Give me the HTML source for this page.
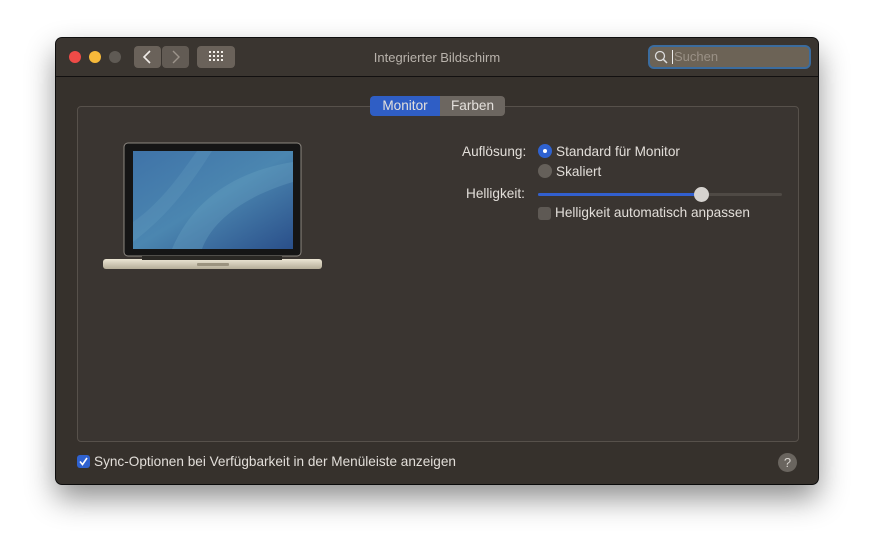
<!DOCTYPE html>
<html><head><meta charset="utf-8"><style>
body{margin:0;width:874px;height:558px;background:#fff;font-family:"Liberation Sans",sans-serif;position:relative;overflow:hidden}
.win{position:absolute;left:56px;top:38px;width:762px;height:446px;background:#36312c;border-radius:6px;box-shadow:0 14px 30px rgba(0,0,0,.45),0 0 0 1px #111;overflow:hidden}
.tb{position:absolute;left:0;top:0;width:762px;height:38px;background:#3a3530;border-bottom:1px solid #121010}
.dot{position:absolute;top:13px;width:12px;height:12px;border-radius:50%}
.btn{position:absolute;top:8px;height:22px;background:#6a625a;border-radius:4px}
.title{position:absolute;left:0;width:762px;top:12px;text-align:center;color:#b8b2ab;font-size:13px}
.search{position:absolute;left:592px;top:7px;width:163px;height:24px;border:2px solid #3b6c9e;border-radius:6px;background:#6c6356;box-sizing:border-box}
.panel{position:absolute;left:21px;top:68px;width:720px;height:334px;border:1px solid #57514b;border-radius:4px;background:#3a3531}
.tabs{position:absolute;left:314px;top:58px;height:20px;border-radius:4px;overflow:hidden;display:flex;font-size:13.6px;color:#e4e0dc}
.tabs div{line-height:20px;text-align:center}
.lbl{position:absolute;color:#e2ded9;font-size:13.6px}
.radio{position:absolute;width:14px;height:14px;border-radius:50%}
</style></head><body>
<div class="win">
 <div class="tb">
  <div class="dot" style="left:13px;background:#ee4b47"></div>
  <div class="dot" style="left:33px;background:#f6b93a"></div>
  <div class="dot" style="left:53px;background:#5f5a54"></div>
  <div class="btn" style="left:78px;width:27px"></div>
  <div class="btn" style="left:106px;width:27px;opacity:.85"></div>
  <svg style="position:absolute;left:78px;top:8px" width="55" height="22"><path d="M16 5 L10 11 L16 17" stroke="#f0ece8" stroke-width="1.6" fill="none"/><path d="M39 5 L45 11 L39 17" stroke="#9c948b" stroke-width="1.4" fill="none"/></svg>
  <div class="btn" style="left:141px;width:38px"></div>
  <svg style="position:absolute;left:153px;top:13px" width="14" height="12" fill="#f4f0ea"><rect x="0" y="0" width="2" height="2"/><rect x="4" y="0" width="2" height="2"/><rect x="8" y="0" width="2" height="2"/><rect x="12" y="0" width="2" height="2"/><rect x="0" y="4" width="2" height="2"/><rect x="4" y="4" width="2" height="2"/><rect x="8" y="4" width="2" height="2"/><rect x="12" y="4" width="2" height="2"/><rect x="0" y="8" width="2" height="2"/><rect x="4" y="8" width="2" height="2"/><rect x="8" y="8" width="2" height="2"/><rect x="12" y="8" width="2" height="2"/></svg>
  <div class="title">Integrierter Bildschirm</div>
  <div class="search">
   <svg style="position:absolute;left:4px;top:3px" width="14" height="14"><circle cx="6" cy="6" r="4.5" stroke="#ddd" stroke-width="1.3" fill="none"/><path d="M9.3 9.3 L13 13" stroke="#ddd" stroke-width="1.5"/></svg>
   <div style="position:absolute;left:22px;top:3px;width:1px;height:14px;background:#eee"></div>
   <div style="position:absolute;left:24px;top:2px;font-size:13px;color:#9a9186">Suchen</div>
  </div>
 </div>
 <div class="panel"></div>
 <div class="tabs"><div style="background:#2f5ec5;width:70px">Monitor</div><div style="background:#6c6660;width:65px">Farben</div></div>
 <svg style="position:absolute;left:46px;top:104px" width="222" height="130">
  <defs><linearGradient id="s" x1="0" y1="0" x2="1" y2="1"><stop offset="0" stop-color="#3f73a8"/><stop offset=".5" stop-color="#4b86b0"/><stop offset="1" stop-color="#2a4f8a"/></linearGradient>
  <linearGradient id="b" x1="0" y1="0" x2="0" y2="1"><stop offset="0" stop-color="#ece6d4"/><stop offset="1" stop-color="#b5ad98"/></linearGradient></defs>
  <rect x="22" y="1" width="177" height="113" rx="4" fill="#151515" stroke="#8c8780"/>
  <rect x="31" y="9" width="160" height="98" fill="url(#s)"/>
  <path d="M70 107 C90 60 130 30 191 20 L191 40 C140 55 110 80 100 107Z" fill="#6aa4c4" opacity=".35"/>
  <path d="M31 80 C60 60 80 30 95 9 L110 9 C90 40 70 70 31 100Z" fill="#6aa4c4" opacity=".25"/>
  <rect x="1" y="117" width="219" height="10" rx="3" fill="url(#b)"/>
  <rect x="40" y="114" width="140" height="4" fill="#2a2824"/>
  <rect x="95" y="121" width="32" height="3" rx="1" fill="#9b937f"/>
 </svg>
 <div class="lbl" style="left:406px;top:106px">Auflösung:</div>
 <div class="radio" style="left:482px;top:106px;background:#2f62d0"><div style="position:absolute;left:5px;top:5px;width:4px;height:4px;border-radius:50%;background:#fff"></div></div>
 <div class="lbl" style="left:500px;top:106px">Standard für Monitor</div>
 <div class="radio" style="left:482px;top:126px;background:#65605a"></div>
 <div class="lbl" style="left:500px;top:126px">Skaliert</div>
 <div class="lbl" style="left:410px;top:148px">Helligkeit:</div>
 <div style="position:absolute;left:482px;top:155px;width:244px;height:3px;background:#4f4a45;border-radius:2px"></div>
 <div style="position:absolute;left:482px;top:155px;width:164px;height:3px;background:#3260cf;border-radius:2px"></div>
 <div style="position:absolute;left:638px;top:149px;width:15px;height:15px;border-radius:50%;background:#d6d3cf"></div>
 <div style="position:absolute;left:482px;top:169px;width:13px;height:13px;border-radius:3px;background:#5e5954"></div>
 <div class="lbl" style="left:499px;top:167px">Helligkeit automatisch anpassen</div>
 <div style="position:absolute;left:21px;top:417px;width:13px;height:13px;border-radius:3px;background:#2f62d0"><svg width="13" height="13"><path d="M3 6.5 L5.5 9.5 L10 3" stroke="#fff" stroke-width="1.6" fill="none"/></svg></div>
 <div class="lbl" style="left:38px;top:416px">Sync-Optionen bei Verfügbarkeit in der Menüleiste anzeigen</div>
 <div style="position:absolute;left:722px;top:415px;width:19px;height:19px;border-radius:50%;background:#6a655f;color:#d8d4cf;font-size:13px;text-align:center;line-height:19px">?</div>
</div>
</body></html>
